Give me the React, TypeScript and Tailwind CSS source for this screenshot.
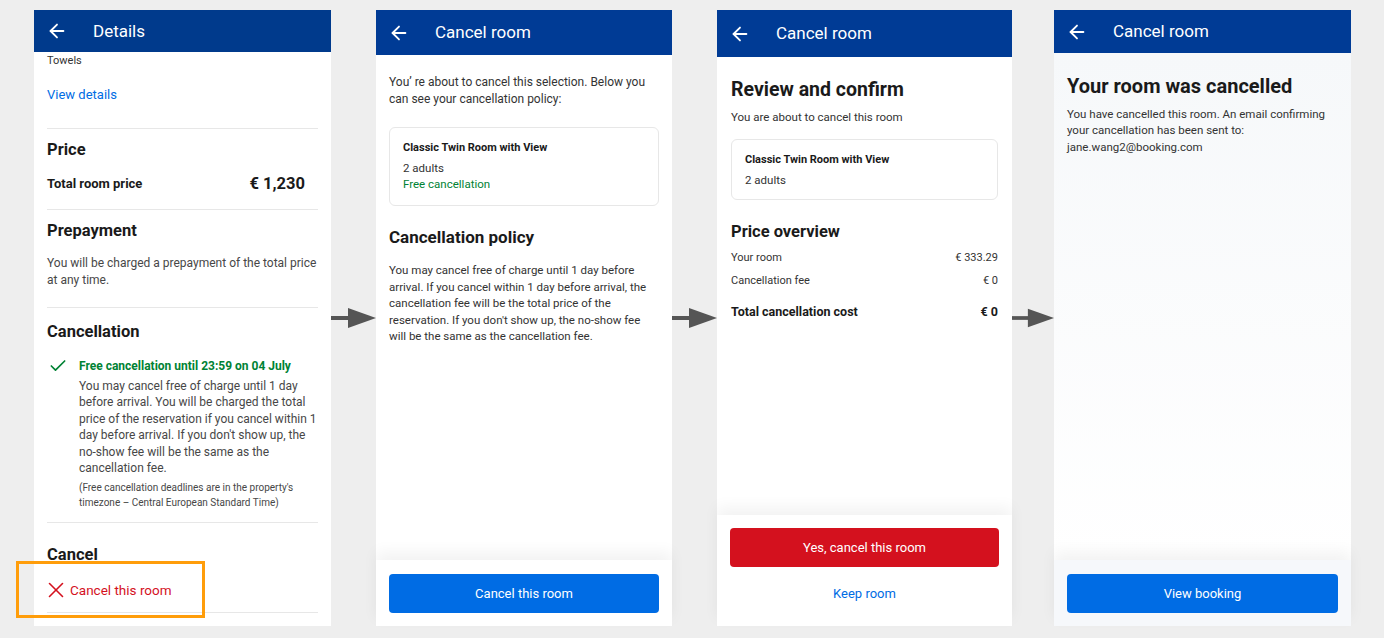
import React from 'react';
import { ArrowLeft, Check, X } from 'lucide-react';

const font = { fontFamily: 'Roboto, "Noto Sans", sans-serif' };

const Header = ({ title, h, bg }: { title: string; h: string; bg: string }) => (
  <div className={`flex items-center gap-[25px] pl-[12px] text-white shrink-0 ${h} ${bg}`}>
    <ArrowLeft size={22} strokeWidth={2} />
    <span className="text-[17px] leading-none">{title}</span>
  </div>
);

const Divider = ({ mt }: { mt: string }) => <div className={`h-px bg-[#e7e7e7] ${mt}`} />;

const FlowArrow = ({ w }: { w: string }) => (
  <div className={`flex items-center justify-end h-[616px] shrink-0 ${w}`}>
    <svg width="45" height="22" viewBox="0 0 45 22">
      <rect x="0" y="9" width="20" height="4" fill="#555555" />
      <polygon points="17,1 45,11 17,21" fill="#555555" />
    </svg>
  </div>
);

const DetailsPanel = () => (
  <div className="relative w-[297px] h-[616px] shrink-0 flex flex-col bg-white">
    <Header title="Details" h="h-[42px]" bg="bg-[#003a8c]" />
    <div className="flex-1 overflow-hidden px-[13px] text-[#1a1a1a]">
      <p className="mt-[2px] text-[11px] leading-[14px] text-[#333]">Towels</p>
      <p className="mt-[18px] text-[13px] leading-[18px] text-[#006ce4]">View details</p>
      <Divider mt="mt-[24px]" />
      <h2 className="mt-[10px] text-[16.5px] leading-[22px] font-bold">Price</h2>
      <div className="mt-[12px] flex items-center justify-between pr-[13px] leading-[22px]">
        <span className="text-[13px] font-bold">Total room price</span>
        <span className="text-[16.5px] font-bold">€ 1,230</span>
      </div>
      <Divider mt="mt-[14px]" />
      <h2 className="mt-[10px] text-[16.5px] leading-[22px] font-bold">Prepayment</h2>
      <p className="mt-[13px] text-[12px] leading-[17px] text-[#474747]">
        You will be charged a prepayment of the total price at any time.
      </p>
      <Divider mt="mt-[18px]" />
      <h2 className="mt-[13px] text-[16.5px] leading-[22px] font-bold">Cancellation</h2>
      <div className="mt-[13px] flex gap-[11px]">
        <Check size={20} strokeWidth={2} className="text-[#008234] ml-[1px] shrink-0" />
        <div>
          <p className="text-[12px] leading-[20px] font-bold text-[#008234]">
            Free cancellation until 23:59 on 04 July
          </p>
          <p className="mt-[2px] text-[12px] leading-[16.4px] text-[#474747]">
            You may cancel free of charge until 1 day before arrival. You will be charged the total price of
            the reservation if you cancel within 1 day before arrival. If you don't show up, the no-show fee
            will be the same as the cancellation fee.
          </p>
          <p className="mt-[4px] text-[10px] leading-[15px] text-[#474747]">
            (Free cancellation deadlines are in the property's timezone – Central European Standard Time)
          </p>
        </div>
      </div>
      <Divider mt="mt-[12px]" />
      <h2 className="mt-[21px] text-[16.5px] leading-[22px] font-bold">Cancel</h2>
      <div className="mt-[11px] flex items-center leading-[20px]">
        <X size={26} strokeWidth={1.5} className="text-[#d4111e] -ml-[4px]" />
        <span className="ml-[1px] text-[13.5px] text-[#d4111e]">Cancel this room</span>
      </div>
      <Divider mt="mt-[9px]" />
    </div>
    <div className="absolute left-[-18px] top-[551px] w-[189px] h-[57px] border-[3px] border-[#ff9d0a]" />
  </div>
);

const RoomCard = ({ free, pt, pb }: { free?: boolean; pt: string; pb: string }) => (
  <div className={`border border-[#e7e7e7] rounded-[6px] px-[13px] ${pt} ${pb}`}>
    <p className="text-[11px] leading-[16px] font-bold text-[#1a1a1a]">Classic Twin Room with View</p>
    <p className="mt-[4px] text-[11.5px] leading-[16px] text-[#333]">2 adults</p>
    {free && <p className="text-[11.5px] leading-[16px] text-[#008234]">Free cancellation</p>}
  </div>
);

const Footer = ({ children, top, bg }: { children: React.ReactNode; top: string; bg: string }) => (
  <div className={`shrink-0 px-[13px] shadow-[0_-8px_14px_rgba(0,0,0,0.05)] ${top} ${bg}`}>{children}</div>
);

const BlueButton = ({ label }: { label: string }) => (
  <button className="w-full h-[39px] rounded-[4px] bg-[#006ce4] text-white text-[13px]">{label}</button>
);

const PolicyPanel = () => (
  <div className="w-[296px] h-[616px] shrink-0 flex flex-col bg-white">
    <Header title="Cancel room" h="h-[45px]" bg="bg-[#003b95]" />
    <div className="flex-1 overflow-hidden px-[13px]">
      <p className="mt-[18.5px] text-[12px] leading-[17px] text-[#333]">
        You’ re about to cancel this selection. Below you can see your cancellation policy:
      </p>
      <div className="mt-[19.5px]">
        <RoomCard free pt="pt-[12px]" pb="pb-[13px]" />
      </div>
      <h2 className="mt-[20px] text-[17px] leading-[22px] font-bold text-[#1a1a1a]">Cancellation policy</h2>
      <p className="mt-[14px] text-[11.5px] leading-[16.5px] text-[#333]">
        You may cancel free of charge until 1 day before arrival. If you cancel within 1 day before arrival,
        the cancellation fee will be the total price of the reservation. If you don't show up, the no-show fee
        will be the same as the cancellation fee.
      </p>
    </div>
    <Footer top="pt-[14px] pb-[13px]" bg="bg-white">
      <BlueButton label="Cancel this room" />
    </Footer>
  </div>
);

const ReviewPanel = () => (
  <div className="w-[295px] h-[616px] shrink-0 flex flex-col bg-white">
    <Header title="Cancel room" h="h-[47px]" bg="bg-[#003b95]" />
    <div className="flex-1 overflow-hidden px-[14px] text-[#1a1a1a]">
      <h1 className="mt-[20px] text-[19.5px] leading-[26px] font-bold">Review and confirm</h1>
      <p className="mt-[6px] text-[11.5px] leading-[16px] text-[#333]">You are about to cancel this room</p>
      <div className="mt-[14px]">
        <RoomCard pt="pt-[12px]" pb="pb-[11px]" />
      </div>
      <h2 className="mt-[21px] text-[16.5px] leading-[22px] font-bold">Price overview</h2>
      <div className="mt-[7px] flex justify-between text-[11px] leading-[16px] text-[#333]">
        <span>Your room</span>
        <span>€ 333.29</span>
      </div>
      <div className="mt-[7px] flex justify-between text-[11px] leading-[16px] text-[#333]">
        <span>Cancellation fee</span>
        <span>€ 0</span>
      </div>
      <div className="mt-[14px] flex justify-between text-[12.5px] leading-[18px] font-bold">
        <span>Total cancellation cost</span>
        <span>€ 0</span>
      </div>
    </div>
    <Footer top="pt-[13px] pb-[23px]" bg="bg-white">
      <button className="w-full h-[39px] rounded-[4px] bg-[#d4111e] text-white text-[13px]">
        Yes, cancel this room
      </button>
      <p className="mt-[18px] text-center text-[13px] leading-[18px] text-[#006ce4]">Keep room</p>
    </Footer>
  </div>
);

const DonePanel = () => (
  <div className="w-[297px] h-[616px] shrink-0 flex flex-col bg-[#fafbfc]">
    <Header title="Cancel room" h="h-[43px]" bg="bg-[#003b95]" />
    <div className="flex-1 overflow-hidden px-[13px] text-[#1a1a1a] bg-gradient-to-b from-[#f6f8fa] to-white">
      <h1 className="mt-[20px] text-[20px] leading-[26px] font-bold">Your room was cancelled</h1>
      <p className="mt-[6.75px] text-[11.5px] leading-[16.5px] text-[#333]">
        You have cancelled this room. An email confirming your cancellation has been sent to:
        jane.wang2@booking.com
      </p>
    </div>
    <Footer top="pt-[14px] pb-[13px]" bg="bg-[#f6f8fb]">
      <BlueButton label="View booking" />
    </Footer>
  </div>
);

export default function App() {
  return (
    <div className="w-[1384px] h-[638px] bg-[#eeeeee] flex items-start pt-[10px] pl-[34px] overflow-hidden" style={font}>
      <DetailsPanel />
      <FlowArrow w="w-[45px]" />
      <PolicyPanel />
      <FlowArrow w="w-[45px]" />
      <ReviewPanel />
      <FlowArrow w="w-[42px]" />
      <DonePanel />
    </div>
  );
}
